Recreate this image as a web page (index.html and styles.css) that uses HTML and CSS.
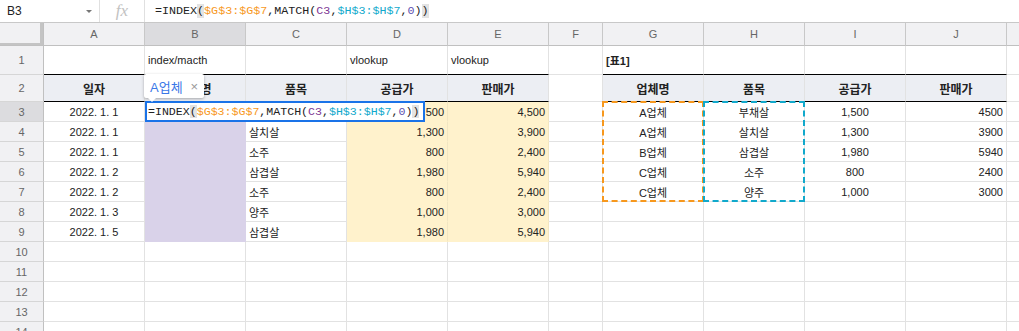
FILE: index.html
```html
<!DOCTYPE html>
<html lang="ko">
<head>
  <meta charset="UTF-8" />
  <title>Sheet</title>
  <link rel="stylesheet" href="styles.css">
</head>
<body>
  <div class="formula-bar">
    <div class="name-box"><span>B3</span><span class="caret"></span></div>
    <div class="fx">fx</div>
    <div class="formula">=INDEX<span class="paren">(</span><span class="ref-g">$G$3:$G$7</span>,MATCH(<span class="ref-c">C3</span>,<span class="ref-h">$H$3:$H$7</span>,<span class="num">0</span>)<span class="paren">)</span></div>
  </div>

  <table class="sheet">
    <colgroup>
      <col class="c-rh"><col class="c-w"><col class="c-w"><col class="c-w"><col class="c-w"><col class="c-w">
      <col class="c-f"><col class="c-w"><col class="c-w"><col class="c-w"><col class="c-w"><col class="c-w">
    </colgroup>
    <tr class="r-cols">
      <td class="corner"></td>
      <td class="ch">A</td><td class="ch sel">B</td><td class="ch">C</td><td class="ch">D</td><td class="ch">E</td>
      <td class="ch">F</td><td class="ch">G</td><td class="ch">H</td><td class="ch">I</td><td class="ch">J</td><td class="ch"></td>
    </tr>
    <tr class="r-1">
      <td class="rh">1</td>
      <td class="top"></td><td class="top">index/macth</td><td class="top"></td><td class="top">vlookup</td><td class="top">vlookup</td>
      <td></td><td class="top bold">[표1]</td><td class="top"></td><td class="top"></td><td class="top"></td><td></td>
    </tr>
    <tr class="r-2">
      <td class="rh">2</td>
      <td class="hd">일자</td><td class="hd">업체명</td><td class="hd">품목</td><td class="hd">공급가</td><td class="hd">판매가</td>
      <td></td><td class="hd">업체명</td><td class="hd">품목</td><td class="hd">공급가</td><td class="hd">판매가</td><td></td>
    </tr>
    <tr>
      <td class="rh sel">3</td>
      <td class="mid">2022. 1. 1</td>
      <td class="pu anchor">
        <div class="hint"><span class="hint-text">A업체</span><span class="hint-close">×</span></div>
        <div class="editor">=INDEX<span class="paren">(</span><span class="ref-g">$G$3:$G$7</span>,MATCH(<span class="ref-c">C3</span>,<span class="ref-h">$H$3:$H$7</span>,<span class="num">0</span>)<span class="paren">)</span></div>
      </td>
      <td></td><td class="ye num-r">1,500</td><td class="ye num-r">4,500</td>
      <td></td>
      <td class="mid anchor">A업체<div class="ants ants-g"></div></td>
      <td class="mid anchor">부채살<div class="ants ants-h"></div></td>
      <td class="mid">1,500</td><td class="num-r">4500</td><td></td>
    </tr>
    <tr>
      <td class="rh">4</td>
      <td class="mid">2022. 1. 1</td><td class="pu"></td><td>살치살</td><td class="ye num-r">1,300</td><td class="ye num-r">3,900</td>
      <td></td><td class="mid">A업체</td><td class="mid">살치살</td><td class="mid">1,300</td><td class="num-r">3900</td><td></td>
    </tr>
    <tr>
      <td class="rh">5</td>
      <td class="mid">2022. 1. 1</td><td class="pu"></td><td>소주</td><td class="ye num-r">800</td><td class="ye num-r">2,400</td>
      <td></td><td class="mid">B업체</td><td class="mid">삼겹살</td><td class="mid">1,980</td><td class="num-r">5940</td><td></td>
    </tr>
    <tr>
      <td class="rh">6</td>
      <td class="mid">2022. 1. 2</td><td class="pu"></td><td>삼겹살</td><td class="ye num-r">1,980</td><td class="ye num-r">5,940</td>
      <td></td><td class="mid">C업체</td><td class="mid">소주</td><td class="mid">800</td><td class="num-r">2400</td><td></td>
    </tr>
    <tr>
      <td class="rh">7</td>
      <td class="mid">2022. 1. 2</td><td class="pu"></td><td>소주</td><td class="ye num-r">800</td><td class="ye num-r">2,400</td>
      <td></td><td class="mid">C업체</td><td class="mid">양주</td><td class="mid">1,000</td><td class="num-r">3000</td><td></td>
    </tr>
    <tr>
      <td class="rh">8</td>
      <td class="mid">2022. 1. 3</td><td class="pu"></td><td>양주</td><td class="ye num-r">1,000</td><td class="ye num-r">3,000</td>
      <td></td><td></td><td></td><td></td><td></td><td></td>
    </tr>
    <tr>
      <td class="rh">9</td>
      <td class="mid">2022. 1. 5</td><td class="pu"></td><td>삼겹살</td><td class="ye num-r">1,980</td><td class="ye num-r">5,940</td>
      <td></td><td></td><td></td><td></td><td></td><td></td>
    </tr>
    <tr><td class="rh">10</td><td></td><td></td><td></td><td></td><td></td><td></td><td></td><td></td><td></td><td></td><td></td></tr>
    <tr><td class="rh">11</td><td></td><td></td><td></td><td></td><td></td><td></td><td></td><td></td><td></td><td></td><td></td></tr>
    <tr><td class="rh">12</td><td></td><td></td><td></td><td></td><td></td><td></td><td></td><td></td><td></td><td></td><td></td></tr>
    <tr><td class="rh">13</td><td></td><td></td><td></td><td></td><td></td><td></td><td></td><td></td><td></td><td></td><td></td></tr>
    <tr><td class="rh">14</td><td></td><td></td><td></td><td></td><td></td><td></td><td></td><td></td><td></td><td></td><td></td></tr>
  </table>
</body>
</html>
```

FILE: styles.css
```css
body {
  margin: 0;
  background: #fff;
  color: #222;
  font-family: "Liberation Sans", "Noto Sans CJK KR", sans-serif;
  font-size: 11px;
  overflow: hidden;
}

/* formula bar */
.formula-bar {
  display: flex;
  height: 22px;
  border-bottom: 1px solid #c8c8c8;
}
.name-box {
  width: 100px;
  box-sizing: border-box;
  display: flex;
  align-items: center;
  justify-content: space-between;
  padding: 0 7px;
  font-size: 12px;
  color: #222;
  border-right: 1px solid #e0e0e0;
}
.caret {
  width: 0;
  height: 0;
  border-left: 3px solid transparent;
  border-right: 3px solid transparent;
  border-top: 3px solid #777;
}
.fx {
  width: 44px;
  display: flex;
  align-items: center;
  justify-content: center;
  font-family: "Liberation Serif", serif;
  font-style: italic;
  font-size: 17px;
  color: #c2c2c2;
  border-right: 1px solid #e0e0e0;
}
.formula {
  display: flex;
  align-items: center;
  padding-left: 10px;
  font-family: "Liberation Mono", monospace;
  font-size: 11.7px;
  white-space: pre;
}
.paren { background: #e3e3e3; }
.ref-g { color: #f7981d; }
.ref-c { color: #7e3794; }
.ref-h { color: #11a9cc; }
.num { color: #5b4fb0; }

/* grid */
.sheet {
  border-collapse: separate;
  border-spacing: 0;
  table-layout: fixed;
  width: 1107px;
}
.c-rh { width: 44px; }
.c-w { width: 101px; }
.c-f { width: 54px; }

.sheet tr { height: 20px; }
.sheet .r-cols { height: 23px; }
.sheet .r-1 { height: 29px; }
.sheet .r-2 { height: 27px; }

.sheet td {
  box-sizing: border-box;
  padding: 0 3px;
  border-right: 1px solid #e2e2e2;
  border-bottom: 1px solid #e2e2e2;
  white-space: nowrap;
  vertical-align: middle;
}

.corner {
  background: #f1f1f3;
  border-right: 1px solid #c0c0c0 !important;
  border-bottom: 1px solid #c0c0c0 !important;
  box-shadow: inset -3px -2px 0 #c4c4c4;
}
.ch {
  background: #f1f1f3;
  color: #666;
  text-align: center;
  border-right-color: #c8c8c8 !important;
  border-bottom-color: #c0c0c0 !important;
}
.rh {
  background: #f1f1f3;
  color: #666;
  text-align: center;
  border-right-color: #c0c0c0 !important;
  border-bottom-color: #d6d6d6 !important;
}
.sel { background: #dcdcdf; }

.top { border-bottom-color: #000 !important; }
.bold { font-weight: bold; }
.hd {
  background: #eceef3;
  font-weight: bold;
  font-size: 12px;
  text-align: center;
  border-bottom-color: #000 !important;
}
.mid { text-align: center; }
.num-r { text-align: right; }

.pu {
  background: #d9d2e9;
  border-right-color: #d9d2e9 !important;
  border-bottom-color: #d9d2e9 !important;
}
.ye {
  background: #fff2cc;
  border-right-color: #f2e6c2 !important;
  border-bottom-color: #fff2cc !important;
}

/* overlays */
.anchor { position: relative; }

.editor {
  position: absolute;
  left: 0;
  top: -1px;
  width: 280px;
  height: 21px;
  box-sizing: border-box;
  border: 2px solid #1a73e8;
  background: #fff;
  padding-left: 1px;
  font-family: "Liberation Mono", monospace;
  font-size: 11.6px;
  line-height: 17px;
  color: #222;
  white-space: pre;
  z-index: 3;
}
.hint {
  position: absolute;
  left: -1px;
  top: -28px;
  width: 60px;
  height: 24px;
  box-sizing: border-box;
  display: flex;
  align-items: center;
  padding-left: 6px;
  background: #fff;
  border-radius: 2px;
  box-shadow: 0 1px 3px rgba(0, 0, 0, 0.3);
  z-index: 4;
}
.hint::after {
  content: "";
  position: absolute;
  left: 4px;
  bottom: -4px;
  border-left: 4px solid transparent;
  border-right: 4px solid transparent;
  border-top: 4px solid #fff;
}
.hint-text {
  color: #3b78e7;
  font-size: 13px;
}
.hint-close {
  color: #999;
  font-size: 13px;
  margin-left: 8px;
}

.ants {
  position: absolute;
  left: -1px;
  top: -1px;
  width: 102px;
  height: 101px;
  box-sizing: border-box;
  z-index: 2;
  pointer-events: none;
}
.ants-g { border: 2px dashed #f7981d; }
.ants-h { border: 2px dashed #11a9cc; }
```
